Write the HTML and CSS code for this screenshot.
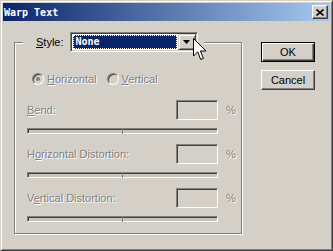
FILE: index.html
```html
<!DOCTYPE html>
<html lang="en">
<head>
    <meta charset="UTF-8">
    <title>Warp Text</title>
    <link rel="stylesheet" href="styles.css">
</head>
<body>
    <div class="window">
        <div class="titlebar">
            <span class="title">Warp Text</span>
            <span class="close-button">
                <svg width="8" height="7" viewBox="0 0 8 7">
                    <path d="M0.5 0.5 L7.5 6.5 M7.5 0.5 L0.5 6.5" stroke="#000" stroke-width="1.6" fill="none"/>
                </svg>
            </span>
        </div>

        <div class="dialog-body">
            <fieldset class="group">
                <legend class="style-row">
                    <span class="style-label"><u>S</u>tyle:</span>
                    <span class="select">
                        <span class="select-value">None</span>
                        <span class="select-arrow">
                            <svg width="7" height="4" viewBox="0 0 7 4"><path d="M0 0 H7 L3.5 4 Z" fill="#000"/></svg>
                        </span>
                    </span>
                </legend>

                <div class="orientation">
                    <span class="radio checked"><span class="radio-dot"></span></span>
                    <span class="disabled"><u>H</u>orizontal</span>
                    <span class="radio"></span>
                    <span class="disabled"><u>V</u>ertical</span>
                </div>

                <div class="param">
                    <div class="param-row">
                        <span class="param-label disabled"><u>B</u>end:</span>
                        <span class="field"></span>
                        <span class="pct disabled">%</span>
                    </div>
                    <div class="slider"></div>
                </div>

                <div class="param">
                    <div class="param-row">
                        <span class="param-label disabled">H<u>o</u>rizontal Distortion:</span>
                        <span class="field"></span>
                        <span class="pct disabled">%</span>
                    </div>
                    <div class="slider"></div>
                </div>

                <div class="param">
                    <div class="param-row">
                        <span class="param-label disabled">V<u>e</u>rtical Distortion:</span>
                        <span class="field"></span>
                        <span class="pct disabled">%</span>
                    </div>
                    <div class="slider"></div>
                </div>
            </fieldset>

            <div class="buttons">
                <button class="btn default">OK</button>
                <button class="btn">Cancel</button>
            </div>
        </div>

        <!-- mouse pointer over the dropdown -->
        <svg class="cursor" width="14" height="23" viewBox="0 0 14 23">
            <path d="M0.5 0.5 V18 L4.7 13.8 L7.7 21.5 L10.4 20.4 L7.4 13 H13 Z" fill="#fff" stroke="#000" stroke-width="1"/>
        </svg>
    </div>
</body>
</html>
```

FILE: styles.css
```css
* {
    box-sizing: border-box;
}

body {
    margin: 0;
    background-color: #d4d0c8;
    font-family: "Liberation Sans", Arial, sans-serif;
    font-size: 11px;
}

.window {
    position: relative;
    width: 333px;
    height: 251px;
    background-color: #d4d0c8;
    border: 1px solid;
    border-color: #d4d0c8 #404040 #404040 #d4d0c8;
    box-shadow: inset 1px 1px 0 #fff, inset -1px -1px 0 #808080;
    padding: 2px;
}

.titlebar {
    height: 18px;
    display: flex;
    align-items: center;
    justify-content: space-between;
    padding: 0 2px 0 1px;
    background: linear-gradient(to right, #0a246a, #a6caf0);
}

.title {
    color: white;
    font-family: "DejaVu Sans Mono", monospace;
    font-weight: bold;
    font-size: 10px;
}

.close-button {
    width: 16px;
    height: 14px;
    display: flex;
    align-items: center;
    justify-content: center;
    background-color: #d4d0c8;
    border: 1px solid;
    border-color: #fff #404040 #404040 #fff;
    box-shadow: inset -1px -1px 0 #808080;
}

.dialog-body {
    display: flex;
    align-items: flex-start;
    padding: 11px 0 0 11px;
    gap: 19px;
}

.group {
    width: 228px;
    margin: 0;
    padding: 0 0 11px 0;
    border: 1px solid #808080;
    box-shadow: inset 1px 1px 0 #fff, 1px 1px 0 #fff;
}

.style-row {
    display: flex;
    align-items: center;
    margin-left: 8px;
    padding: 0 6px 0 13px;
    background-color: #d4d0c8;
}

.style-label {
    margin-right: 6px;
}

.select {
    width: 128px;
    height: 20px;
    display: flex;
    align-items: center;
    padding: 1px;
    background-color: #fff;
    border: 1px solid;
    border-color: #808080 #fff #fff #808080;
    box-shadow: inset 1px 1px 0 #404040, inset -1px -1px 0 #d4d0c8;
}

.select-value {
    flex: 1;
    height: 14px;
    margin: 0 1px 0 1px;
    padding-left: 2px;
    line-height: 12px;
    color: white;
    background-color: #0a246a;
    border: 1px dotted #fff;
    font-family: "DejaVu Sans Mono", monospace;
    font-weight: bold;
    font-size: 10px;
}

.select-arrow {
    width: 18px;
    height: 16px;
    display: flex;
    align-items: center;
    justify-content: center;
    background-color: #d4d0c8;
    border: 1px solid;
    border-color: #d4d0c8 #404040 #404040 #d4d0c8;
    box-shadow: inset 1px 1px 0 #fff, inset -1px -1px 0 #808080;
}

.disabled {
    color: #808080;
    text-shadow: 1px 1px 0 #fff;
}

.orientation {
    display: flex;
    align-items: center;
    height: 13px;
    margin-top: 20px;
    padding-left: 17px;
}

.radio {
    width: 12px;
    height: 12px;
    display: flex;
    align-items: center;
    justify-content: center;
    margin-right: 3px;
    border-radius: 50%;
    border: 1px solid;
    border-color: #808080 #fff #fff #808080;
    box-shadow: inset 1px 1px 0 #404040;
    background-color: #d4d0c8;
}

.orientation .radio + span {
    margin-right: 10px;
}

.radio-dot {
    width: 4px;
    height: 4px;
    border-radius: 50%;
    background-color: #808080;
}

.param {
    margin-top: 15px;
    padding-left: 12px;
}

.param + .param {
    margin-top: 10px;
}

.param-row {
    display: flex;
    align-items: center;
    height: 20px;
}

.param-label {
    width: 149px;
}

.field {
    width: 42px;
    height: 20px;
    border: 1px solid;
    border-color: #808080 #fff #fff #808080;
    box-shadow: inset 1px 1px 0 #404040, inset -1px -1px 0 #d4d0c8;
}

.pct {
    margin-left: 8px;
}

.slider {
    position: relative;
    width: 191px;
    height: 6px;
    margin-top: 8px;
    border: 1px solid;
    border-color: #808080 #fff #fff #808080;
    box-shadow: inset 1px 1px 0 #404040;
    background-color: #c8c4bc;
}

/* centre tick on the track */
.slider::after {
    content: "";
    position: absolute;
    left: 94px;
    top: -1px;
    width: 1px;
    height: 6px;
    background-color: #808080;
}

.buttons {
    display: flex;
    flex-direction: column;
    gap: 8px;
    margin-top: 10px;
}

.btn {
    width: 54px;
    height: 20px;
    padding: 0;
    font-family: "Liberation Sans", Arial, sans-serif;
    font-size: 11px;
    color: #000;
    background-color: #d4d0c8;
    border: 1px solid;
    border-color: #fff #404040 #404040 #fff;
    box-shadow: inset -1px -1px 0 #808080;
}

.btn.default {
    border-color: #000;
    box-shadow: inset 1px 1px 0 #fff, inset -1px -1px 0 #404040, inset -2px -2px 0 #808080;
}

.cursor {
    position: absolute;
    left: 192px;
    top: 37px;
}
```
